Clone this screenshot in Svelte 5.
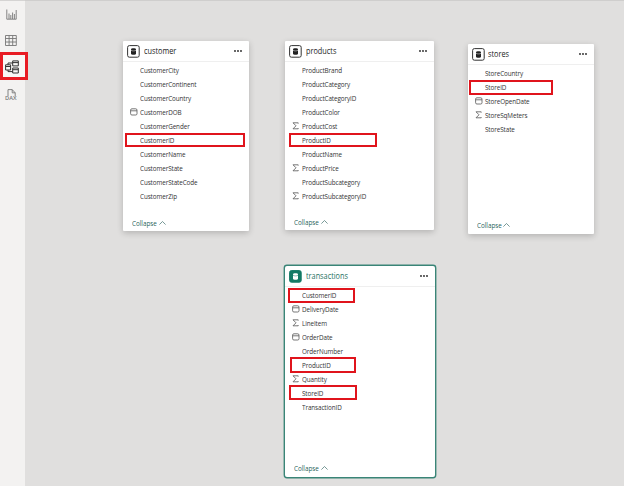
<script>
  const tables = [
    { name: 'customer', x: 123, y: 41, w: 126, h: 190, foot: 223,
      fields: [['CustomerCity'], ['CustomerContinent'], ['CustomerCountry'], ['CustomerDOB', 'date'], ['CustomerGender'], ['CustomerID'], ['CustomerName'], ['CustomerState'], ['CustomerStateCode'], ['CustomerZip']] },
    { name: 'products', x: 285, y: 41, w: 149, h: 189, foot: 222,
      fields: [['ProductBrand'], ['ProductCategory'], ['ProductCategoryID'], ['ProductColor'], ['ProductCost', 'sum'], ['ProductID'], ['ProductName'], ['ProductPrice', 'sum'], ['ProductSubcategory'], ['ProductSubcategoryID', 'sum']] },
    { name: 'stores', x: 467.5, y: 44, w: 126, h: 190, foot: 225,
      fields: [['StoreCountry'], ['StoreID'], ['StoreOpenDate', 'date'], ['StoreSqMeters', 'sum'], ['StoreState']] },
    { name: 'transactions', x: 285, y: 266, w: 150, h: 211, foot: 468, selected: true,
      fields: [['CustomerID'], ['DeliveryDate', 'date'], ['LineItem', 'sum'], ['OrderDate', 'date'], ['OrderNumber'], ['ProductID'], ['Quantity', 'sum'], ['StoreID'], ['TransactionID']] }
  ];
  const marks = [
    [125, 133, 120, 14], [289, 133, 88, 14], [469, 80, 84, 15],
    [288, 288, 67, 15], [290, 357, 66, 16], [289, 385, 68, 15]
  ];
</script>

<div class="app">
  <nav class="rail">
    <span class="view">
      <svg width="11" height="11" viewBox="0 0 11 11" fill="none" stroke="#777" stroke-width=".9">
        <path d="M.8.5v9.7h9.4V1M3 10V4.5M4.8 10V6M6.6 10V3.5M8.4 10V5" />
      </svg>
    </span>
    <span class="view">
      <svg width="12" height="11" viewBox="0 0 12 11" fill="none" stroke="#777" stroke-width=".9">
        <path d="M.5.5h10.8v10H.5zM.5 3.5h10.8M.5 7h10.8M4.1.5v10M7.7.5v10" />
      </svg>
    </span>
    <span class="view active">
      <svg width="14" height="14" viewBox="0 0 14 14" fill="none" stroke="#333" stroke-width="1">
        <path d="M.6 4.8h5v5.2h-5zM.6 6.5h5M7.7.9h5.6v5H7.7zM7.7 2.6h5.6M7.7 8h5.6v5H7.7zM7.7 9.7h5.6M3 4.8V3h4.7M3 10v1.6h4.7" />
      </svg>
    </span>
    <span class="view">
      <svg width="13" height="12" viewBox="0 0 13 12" fill="none" stroke="#777" stroke-width=".9">
        <path d="M3 7V.6h4.2l3 3.2v3.4M7.2.6v3.2h3" />
        <text x="0" y="11.3" font-size="4.8" font-weight="600" textLength="11.5" lengthAdjust="spacingAndGlyphs" fill="#777" stroke="none">DAX</text>
      </svg>
    </span>
  </nav>

  <main class="canvas">
    {#each tables as t}
      <section class="card" class:selected={t.selected} style="left:{t.x}px;top:{t.y}px;width:{t.w}px;height:{t.h}px">
        <header>
          <svg class="db" width="13" height="13" viewBox="0 0 13 13">
            <rect class="frame" x=".6" y=".6" width="11.6" height="11.6" rx="1.8" />
            <path class="drum" d="M4 4.3C4 3 9 3 9 4.3v4.4c0 1.3-5 1.3-5 0z" />
            <path class="line" d="M4 5.3c1 .8 4 .8 5 0" />
          </svg>
          <h2>{t.name}</h2>
          <svg class="more" width="8" height="2" viewBox="0 0 8 2" fill="#222">
            <circle cx="1" cy="1" r=".9" /><circle cx="4" cy="1" r=".9" /><circle cx="7" cy="1" r=".9" />
          </svg>
        </header>
        <ul>
          {#each t.fields as [label, kind]}
            <li>
              <span class="kind">
                {#if kind === 'date'}
                  <svg width="8" height="8" viewBox="0 0 8 8" fill="none" stroke="#555" stroke-width=".8">
                    <rect x=".6" y=".8" width="6.4" height="6.2" rx="1.3" /><path d="M.6 2.8H7" />
                  </svg>
                {:else if kind === 'sum'}
                  <svg width="8" height="8" viewBox="0 0 8 8" fill="none" stroke="#555" stroke-width=".8">
                    <path d="M6.2 1.6V.8H1l3 3-3 3h5.2V6" />
                  </svg>
                {/if}
              </span>
              <span class="label">{label}</span>
            </li>
          {/each}
        </ul>
        <footer style="height:{(t.y + t.h - t.foot) * 2}px">
          <span class="collapse">Collapse</span>
          <svg width="7" height="4" viewBox="0 0 7 4" fill="none" stroke="#3f6f6b" stroke-width=".7"><path d="M.4 3.6 3.5.5l3.1 3.1" /></svg>
        </footer>
      </section>
    {/each}
  </main>
  {#each marks as [x, y, w, h]}
    <i class="mark" style="left:{x}px;top:{y}px;width:{w}px;height:{h}px"></i>
  {/each}
</div>

<style>
  :global(body) { background: #fff; }
  .app {
    position: relative;
    display: flex;
    width: 624px;
    height: 486px;
    overflow: hidden;
    font-family: "Open Sans", "Noto Sans", sans-serif;
    background: #e0dfde;
    box-shadow: inset 0 1px 0 #cfcecd;
  }
  .rail {
    display: flex;
    flex-direction: column;
    width: 25px;
    background: #f3f2f1;
    box-sizing: border-box;
    border-top: 1px solid #d5d4d3;
  }
  .view {
    display: flex;
    align-items: center;
    justify-content: center;
    width: 22px;
    height: 26px;
  }
  .view svg { display: block; }
  .active {
    width: 28px;
    height: 28px;
    margin: -1px -3px 2px 0;
    box-sizing: border-box;
    border: 3px solid #e81c24;
    padding: 2px 5px 0 0;
    z-index: 1;
    flex: none;
    background: #f8f7f6;
  }
  .active svg { flex: none; }
  .canvas { flex: 1; }
  .card {
    position: absolute;
    display: flex;
    flex-direction: column;
    background: #fff;
    border-radius: 1px;
    box-shadow: 0 2px 6px rgba(0, 0, 0, .2);
  }
  .selected { box-shadow: 0 0 0 1.4px #3a8577; border-radius: 2px; }
  header {
    display: flex;
    align-items: center;
    height: 21px;
    box-sizing: border-box;
    padding: 0 7px 0 4px;
    border-bottom: 1px solid #efefef;
  }
  h2 {
    flex: 1;
    margin: 0 0 0 3.5px;
    font-size: 8.3px;
    line-height: 12px;
    font-weight: 500;
    color: #222;
    transform: scaleX(.88);
    transform-origin: 0 50%;
  }
  .selected h2 { color: #26705f; }
  .frame { fill: #fff; stroke: #333; stroke-width: 1; }
  .drum { fill: #222; }
  .line { fill: none; stroke: #fff; stroke-width: .5; }
  .selected .frame { fill: #147a66; stroke: #147a66; }
  .selected .drum { fill: #fff; }
  .selected .line { stroke: #147a66; }
  ul { flex: 1; list-style: none; margin: 0; padding: 1px 0 0; }
  li { display: flex; align-items: center; height: 14px; }
  .kind { display: flex; width: 10px; margin-left: 7px; }
  .label {
    font-size: 7.1px;
    line-height: 14px;
    letter-spacing: -.1px;
    color: #333;
    white-space: nowrap;
    transform: scaleX(.89);
    transform-origin: 0 50%;
  }
  footer {
    display: flex;
    align-items: center;
    padding-left: 9px;
    font-size: 7.1px;
    line-height: 10px;
    color: #1f5f5a;
  }
  .collapse {
    width: 26.5px;
    white-space: nowrap;
    transform: scaleX(.89);
    transform-origin: 0 50%;
  }
  .mark {
    position: absolute;
    box-sizing: border-box;
    border: 2px solid #e0141c;
  }
</style>
